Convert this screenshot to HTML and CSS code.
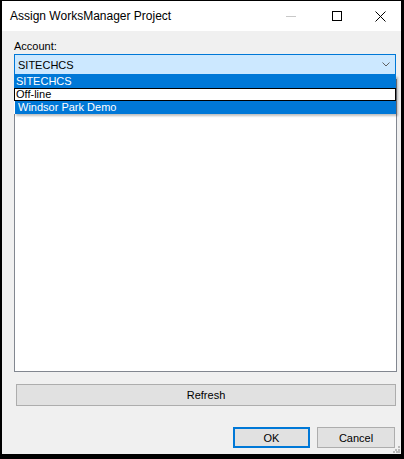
FILE: index.html
```html
<!DOCTYPE html>
<html lang="en">
<head>
    <meta charset="UTF-8">
    <meta name="viewport" content="width=device-width, initial-scale=1.0">
    <title>Assign WorksManager Project</title>
    <link rel="stylesheet" href="styles.css">
</head>
<body>
    <div class="window">
        <div class="titlebar">
            <span class="title">Assign WorksManager Project</span>
            <div class="caption-buttons">
                <span class="cap-btn min">
                    <svg width="10" height="10" viewBox="0 0 10 10"><path d="M0 5.5H10" stroke="#c8c8c8" stroke-width="1"/></svg>
                </span>
                <span class="cap-btn max">
                    <svg width="10" height="10" viewBox="0 0 10 10"><rect x="0.5" y="0.5" width="9" height="9" fill="none" stroke="#000" stroke-width="1"/></svg>
                </span>
                <span class="cap-btn close">
                    <svg width="11" height="11" viewBox="0 0 11 11"><path d="M0.5 0.5L10.5 10.5M10.5 0.5L0.5 10.5" stroke="#000" stroke-width="1"/></svg>
                </span>
            </div>
        </div>

        <div class="content">
            <label class="field-label">Account:</label>
            <div class="combo-wrap">
                <div class="combo">
                    <span>SITECHCS</span>
                    <svg class="chevron" width="8" height="5" viewBox="0 0 8 5"><path d="M0.5 0.5L4 4L7.5 0.5" fill="none" stroke="#606060" stroke-width="1"/></svg>
                </div>
                <ul class="dropdown">
                    <li class="selected">SITECHCS</li>
                    <li class="focused">Off-line</li>
                    <li class="selected indent">Windsor Park Demo</li>
                </ul>
            </div>
            <div class="listbox"></div>
            <button class="btn refresh">Refresh</button>
            <div class="actions">
                <button class="btn ok">OK</button>
                <button class="btn cancel">Cancel</button>
            </div>
        </div>

        <svg class="grip" width="7" height="7" viewBox="0 0 7 7">
            <rect x="5" y="0" width="2" height="2" fill="#b8b8b8"/>
            <rect x="2" y="3" width="2" height="2" fill="#b8b8b8"/>
            <rect x="5" y="3" width="2" height="2" fill="#b8b8b8"/>
            <rect x="0" y="5" width="2" height="2" fill="#b8b8b8"/>
            <rect x="3" y="5" width="2" height="2" fill="#b8b8b8"/>
            <rect x="5" y="5" width="2" height="2" fill="#b8b8b8"/>
        </svg>
    </div>
</body>
</html>
```

FILE: styles.css
```css
body {
    margin: 0;
    background: #000;
    font-family: "Liberation Sans", Arial, sans-serif;
    font-size: 11px;
    color: #000;
}

.window {
    position: relative;
    margin: 1px 3px 0 2px;
    width: 399px;
    height: 453px;
    background: #f0f0f0;
    display: flex;
    flex-direction: column;
}

.titlebar {
    height: 30px;
    background: #fff;
    display: flex;
    align-items: center;
    padding-left: 8px;
}

.title {
    font-size: 12px;
}

.caption-buttons {
    margin-left: auto;
    display: flex;
    height: 30px;
}

.cap-btn {
    display: flex;
    align-items: center;
    justify-content: center;
}

.cap-btn.min {
    width: 46px;
}

.cap-btn.max {
    width: 45px;
}

.cap-btn.close {
    width: 42px;
}

.content {
    padding: 9px 6px 0 12px;
    display: flex;
    flex-direction: column;
}

.field-label {
    display: block;
    line-height: 13px;
    margin-bottom: 1px;
}

.combo-wrap {
    position: relative;
    width: 382px;
}

.combo {
    height: 21px;
    box-sizing: border-box;
    border: 1px solid #0078d7;
    background: #cce8ff;
    display: flex;
    align-items: center;
    padding-left: 3px;
    padding-right: 5px;
}

.chevron {
    margin-left: auto;
}

.dropdown {
    position: absolute;
    top: 100%;
    left: 0;
    width: 382px;
    margin: 0;
    padding: 0;
    list-style: none;
    background: #fff;
    box-shadow: 2px 2px 2px rgba(0, 0, 0, 0.25);
    z-index: 2;
}

.dropdown li {
    height: 13px;
    line-height: 13px;
    padding-left: 2px;
    box-sizing: border-box;
    white-space: nowrap;
}

.dropdown li.selected {
    background: #0078d7;
    color: #fff;
}

.dropdown li.focused {
    border: 1px solid #000;
    line-height: 11px;
    padding-left: 1px;
}

.dropdown li.indent {
    margin-left: 1px;
    padding-left: 3px;
}

.listbox {
    margin-top: 4px;
    width: 383px;
    height: 293px;
    box-sizing: border-box;
    border: 1px solid #828790;
    background: #fff;
}

.btn {
    font-family: "Liberation Sans", Arial, sans-serif;
    font-size: 11px;
    color: #000;
    background: #e1e1e1;
    border: 1px solid #adadad;
    padding: 0;
    box-sizing: border-box;
}

.refresh {
    margin-top: 12px;
    margin-left: 2px;
    width: 380px;
    height: 22px;
}

.actions {
    margin-top: 21px;
    display: flex;
    justify-content: flex-end;
    gap: 7px;
}

.ok {
    width: 77px;
    height: 21px;
    border: 2px solid #0078d7;
}

.cancel {
    width: 78px;
    height: 21px;
}

.grip {
    position: absolute;
    right: 1px;
    bottom: 1px;
}
```
